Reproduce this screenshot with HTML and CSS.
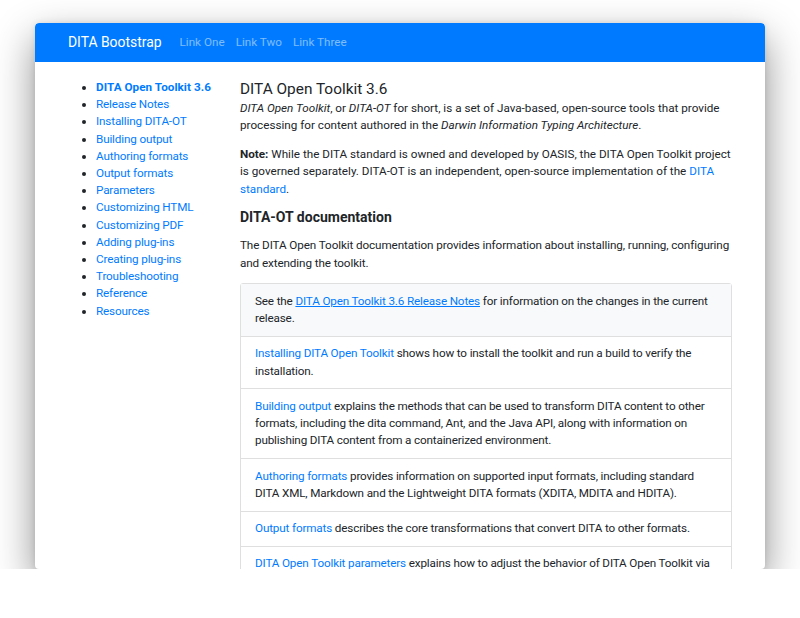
FILE: index.html
```html
<!DOCTYPE html>
<html>
<head>
<meta charset="utf-8">
<link rel="stylesheet" href="styles.css">
</head>
<body>
<div class="window">
  <nav class="navbar">
    <span class="brand">DITA Bootstrap</span>
    <span class="navlink">Link One</span>
    <span class="navlink">Link Two</span>
    <span class="navlink">Link Three</span>
  </nav>
  <div class="container">
    <aside class="sidebar">
      <ul class="toc">
        <li><a class="active">DITA Open Toolkit 3.6</a></li>
        <li><a>Release Notes</a></li>
        <li><a>Installing DITA-OT</a></li>
        <li><a>Building output</a></li>
        <li><a>Authoring formats</a></li>
        <li><a>Output formats</a></li>
        <li><a>Parameters</a></li>
        <li><a>Customizing HTML</a></li>
        <li><a>Customizing PDF</a></li>
        <li><a>Adding plug-ins</a></li>
        <li><a>Creating plug-ins</a></li>
        <li><a>Troubleshooting</a></li>
        <li><a>Reference</a></li>
        <li><a>Resources</a></li>
      </ul>
    </aside>
    <main class="main">
      <h1 class="title">DITA Open Toolkit 3.6</h1>
      <p class="para"><em>DITA Open Toolkit</em>, or <em>DITA-OT</em> for short, is a set of Java-based, open-source tools that provide processing for content authored in the <em>Darwin Information Typing Architecture</em>.</p>
      <p class="para"><strong>Note:</strong> While the DITA standard is owned and developed by OASIS, the DITA Open Toolkit project is governed separately. DITA-OT is an independent, open-source implementation of the <a class="link">DITA standard</a>.</p>
      <h2 class="subtitle">DITA-OT documentation</h2>
      <p class="para tight">The DITA Open Toolkit documentation provides information about installing, running, configuring and extending the toolkit.</p>
      <div class="list-group">
        <div class="item item-first">See the <a class="link underline">DITA Open Toolkit 3.6 Release Notes</a> for information on the changes in the current release.</div>
        <div class="item"><a class="link">Installing DITA Open Toolkit</a> shows how to install the toolkit and run a build to verify the installation.</div>
        <div class="item"><a class="link">Building output</a> explains the methods that can be used to transform DITA content to other formats, including the dita command, Ant, and the Java API, along with information on publishing DITA content from a containerized environment.</div>
        <div class="item"><a class="link">Authoring formats</a> provides information on supported input formats, including standard DITA XML, Markdown and the Lightweight DITA formats (XDITA, MDITA and HDITA).</div>
        <div class="item"><a class="link">Output formats</a> describes the core transformations that convert DITA to other formats.</div>
        <div class="item"><a class="link">DITA Open Toolkit parameters</a> explains how to adjust the behavior of DITA Open Toolkit via Ant properties or command-line options.</div>
      </div>
    </main>
  </div>
</div>
</body>
</html>
```
FILE: styles.css
```css
html, body {
  margin: 0;
  padding: 0;
  background: #fff;
}
body {
  padding: 23px 35px 0;
  font-family: Roboto, "Liberation Sans", sans-serif;
  font-size: 11.7px;
  line-height: 17.25px;
  color: #212529;
}
.window {
  width: 730px;
  height: 546px;
  overflow: hidden;
  border-radius: 4px;
  background: #fff;
  box-shadow: 0 16px 40px rgba(0,0,0,0.45), 0 0 6px rgba(0,0,0,0.1);
}
.navbar {
  height: 39px;
  background: #007bff;
  display: flex;
  align-items: center;
  padding-left: 33px;
  border-radius: 4px 4px 0 0;
}
.brand {
  color: #fff;
  font-size: 13.9px;
  margin-right: 18px;
}
.navlink {
  color: rgba(255,255,255,0.5);
  font-size: 11.7px;
  margin-right: 11px;
}
.container {
  display: flex;
  padding-top: 17px;
}
.sidebar {
  width: 205px;
  flex: none;
}
.toc {
  margin: 0;
  padding-left: 61px;
  color: #212529;
  font-size: 11.7px;
}
.toc li {
  line-height: 17.2px;
}
.toc a {
  color: #007bff;
  letter-spacing: -0.15px;
}
.toc a.active {
  font-weight: 700;
  letter-spacing: 0.05px;
}
.main {
  width: 492px;
  flex: none;
}
.title {
  margin: 0;
  font-size: 15.4px;
  font-weight: 400;
  line-height: 21px;
}
.para {
  margin: 0 0 11.5px;
}
.tight {
  letter-spacing: -0.1px;
}
.subtitle {
  margin: 0 0 11px;
  font-size: 14px;
  font-weight: 700;
  line-height: 17px;
}
.link {
  color: #007bff;
}
.underline {
  text-decoration: underline;
}
.list-group {
  border: 1px solid rgba(0,0,0,0.125);
  border-radius: 3px;
  letter-spacing: -0.15px;
}
.item {
  padding: 8.5px 14px;
  border-top: 1px solid rgba(0,0,0,0.125);
}
.item-first {
  border-top: none;
  background: #f8f9fa;
}
```
